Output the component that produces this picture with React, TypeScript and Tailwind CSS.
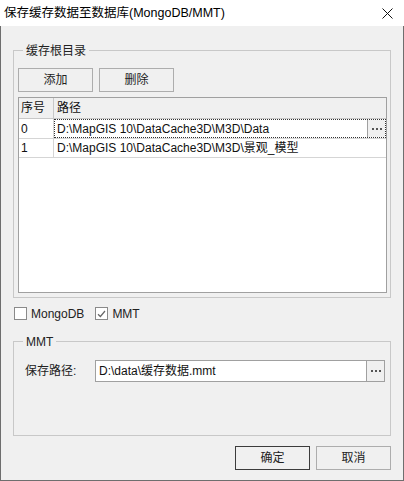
import React from "react";

const font = { fontFamily: '"Liberation Sans", "Noto Sans CJK SC", sans-serif' };

function Btn({ children, dark }: { children: React.ReactNode; dark?: boolean }) {
  return (
    <div
      className={`w-[75px] h-[24px] flex items-center justify-center text-[12px] text-[#222] bg-[#f0f0f0] border ${
        dark ? "border-[#3c3c3c]" : "border-[#adadad]"
      }`}
    >
      {children}
    </div>
  );
}

function Dots() {
  return (
    <div className="w-[18px] self-stretch flex items-center justify-center gap-[2px] bg-[#f0f0f0] border-l border-[#a0a0a0]">
      <span className="w-[2px] h-[2px] bg-[#555]" />
      <span className="w-[2px] h-[2px] bg-[#555]" />
      <span className="w-[2px] h-[2px] bg-[#555]" />
    </div>
  );
}

function Group({ label, children, className }: { label: string; children: React.ReactNode; className?: string }) {
  return (
    <div className={`relative border border-[#c8c8c8] ${className ?? ""}`}>
      <span className="absolute left-[9px] top-0 -translate-y-1/2 px-[3px] bg-[#f0f0f0] text-[12px] leading-[16px] text-[#222]">
        {label}
      </span>
      {children}
    </div>
  );
}

function Checkbox({ checked, label }: { checked?: boolean; label: string }) {
  return (
    <div className="flex items-center gap-[4px]">
      <div className="w-[13px] h-[13px] bg-white border border-[#8a8a8a] flex items-center justify-center">
        {checked && (
          <svg width="9" height="8" viewBox="0 0 9 8">
            <path d="M1 4.2 L3.4 6.5 L8 1" fill="none" stroke="#666" strokeWidth="1.2" />
          </svg>
        )}
      </div>
      <span className="text-[12px] text-[#222]">{label}</span>
    </div>
  );
}

export default function App() {
  return (
    <div className="w-[404px] h-[481px] flex flex-col" style={font}>
      <div className="h-[26px] bg-white flex items-center pl-[4px] pr-[11px]">
        <span className="text-[12.5px] text-black flex-1">保存缓存数据至数据库(MongoDB/MMT)</span>
        <svg width="11" height="11" viewBox="0 0 11 11">
          <path d="M0.5 0.5 L10.5 10.5 M10.5 0.5 L0.5 10.5" stroke="#111" strokeWidth="1" />
        </svg>
      </div>
      <div className="flex-1 bg-[#f0f0f0] border-l border-r border-b border-[#6e6e6e] pl-[12px] pr-[12px] pt-[24px] flex flex-col">
        <Group label="缓存根目录" className="h-[248px] pt-[17px] pl-[4px] pr-[3px] pb-[4px] flex flex-col">
          <div className="flex gap-[6px]">
            <Btn>添加</Btn>
            <Btn>删除</Btn>
          </div>
          <div className="mt-[5px] flex-1 bg-white border border-[#a0a0a0] flex flex-col text-[12px] text-[#111]">
            <div className="h-[21px] flex bg-[#f0f0f0] border-b border-[#c8c8c8]">
              <div className="w-[35px] border-r border-[#c8c8c8] flex items-center pl-[2px]">序号</div>
              <div className="flex-1 flex items-center pl-[3px]">路径</div>
            </div>
            <div className="h-[20px] flex border-b border-[#d5d5d5]">
              <div className="w-[35px] border-r border-[#d5d5d5] flex items-center pl-[2px]">0</div>
              <div className="flex-1 flex items-stretch border border-dotted border-[#333]">
                <div className="flex-1 flex items-center pl-[2px]">D:\MapGIS 10\DataCache3D\M3D\Data</div>
                <Dots />
              </div>
            </div>
            <div className="h-[19px] flex border-b border-[#d5d5d5]">
              <div className="w-[35px] border-r border-[#d5d5d5] flex items-center pl-[2px]">1</div>
              <div className="flex-1 flex items-center pl-[3px]">D:\MapGIS 10\DataCache3D\M3D\景观_模型</div>
            </div>
          </div>
        </Group>
        <div className="flex items-center gap-[11px] mt-[9px] pl-[1px] h-[13px]">
          <Checkbox label="MongoDB" />
          <Checkbox checked label="MMT" />
        </div>
        <Group label="MMT" className="mt-[21px] h-[95px] pt-[18px] pl-[11px] pr-[5px]">
          <div className="flex items-center">
            <span className="w-[70px] text-[12px] text-[#222]">保存路径:</span>
            <div className="flex-1 h-[22px] bg-white border border-[#a0a0a0] flex items-stretch">
              <div className="flex-1 flex items-center pl-[3px] text-[12px] text-[#111]">D:\data\缓存数据.mmt</div>
              <Dots />
            </div>
          </div>
        </Group>
        <div className="flex justify-end gap-[6px] mt-[10px] pr-[0px]">
          <Btn dark>确定</Btn>
          <Btn>取消</Btn>
        </div>
      </div>
    </div>
  );
}
